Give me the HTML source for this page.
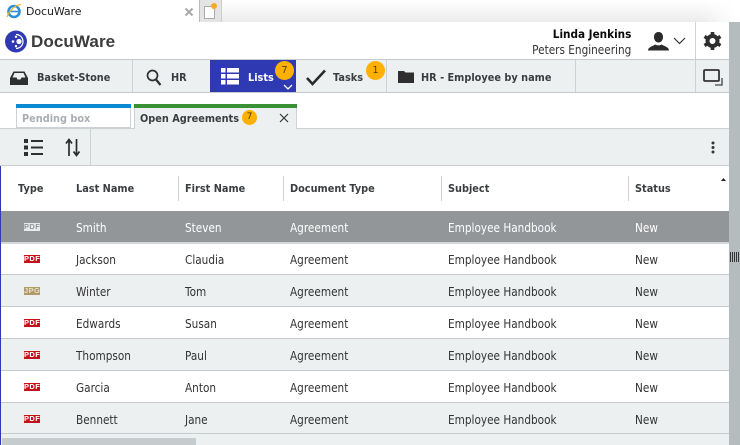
<!DOCTYPE html>
<html><head><meta charset="utf-8">
<style>
html,body{margin:0;padding:0;background:#fff;}
#p{position:relative;width:740px;height:445px;overflow:hidden;background:#fff;font-family:"DejaVu Sans","Liberation Sans",sans-serif;font-size:11px;color:#333;}
#p div,#p span.a,#p svg{position:absolute;}
.t{white-space:nowrap;line-height:14px;}
.b{font-weight:bold;font-size:11px;color:#3a3d40;transform:scaleX(.887);transform-origin:0 50%;}
.n{top:60px;height:32px;background:#edf0f1;}
.v{background:#ccd1d3;width:1px;}
.r{left:1px;width:728px;height:31px;}
.s{left:1px;width:728px;height:1px;background:#c6cbce;}
.c{white-space:nowrap;line-height:14px;font-size:12px;color:#333;transform:scaleX(.875);transform-origin:0 50%;}
.ic{left:24px;width:16px;height:8px;background:#c8101a;color:#fff;font:bold 7.5px/8px "Liberation Sans",sans-serif;letter-spacing:.4px;text-align:center;}
.h{top:182px;white-space:nowrap;line-height:14px;font-weight:bold;font-size:11px;color:#3a3d40;transform:scaleX(.887);transform-origin:0 50%;}
.hv{top:176px;height:25px;width:1px;background:#ccd1d3;}
.bd{border-radius:50%;background:#ffb000;color:#4a3b10;text-align:center;font-size:9.5px;}
</style></head><body><div id="p">
<!-- browser chrome -->
<div style="left:199px;top:0;width:541px;height:22px;background:linear-gradient(180deg,#fff 0,#ececec 100%)"></div>
<div style="left:700px;top:0;width:40px;height:22px;background:linear-gradient(90deg,rgba(255,255,255,0) 0,#fff 90%)"></div>
<div style="left:199px;top:0;width:22px;height:22px;background:#e4e4e4"></div>
<div style="left:199px;top:0;width:1px;height:22px;background:#bbb"></div>
<div style="left:221px;top:0;width:1px;height:22px;background:#ccc"></div>
<div style="left:204px;top:6px;width:11px;height:13px;background:#fff;border:1px solid #aaa;box-sizing:border-box"></div>
<div style="left:211px;top:3px;width:6px;height:6px;background:#f9a825;border-radius:50%"></div>
<svg style="left:6px;top:3px" width="17" height="16" viewBox="0 0 17 16"><circle cx="8" cy="8.500" r="5.500" fill="none" stroke="#2f8fd8" stroke-width="2.600"/><path d="M3 8.500h10" stroke="#2f8fd8" stroke-width="1.600"/><path d="M1 14C3 8 9 2 15 1.500" fill="none" stroke="#f2b632" stroke-width="1.300"/></svg>
<div class="t" style="left:26px;top:5px;font-size:11px;color:#222;letter-spacing:-.1px">DocuWare</div>
<svg style="left:184px;top:7px" width="10" height="10" viewBox="0 0 10 10"><path d="M1.500 1.500l7 7M8.500 1.500l-7 7" stroke="#aaa" stroke-width="2"/></svg>

<!-- header -->
<svg style="left:5px;top:30px" width="22" height="23" viewBox="0 0 22 23"><circle cx="11" cy="11.500" r="11" fill="#2f3ab2"/><circle cx="14" cy="11.500" r="2.600" fill="#fff"/><circle cx="8" cy="11.500" r="1.300" fill="#fff"/><circle cx="11" cy="6.800" r="1.200" fill="#fff"/><circle cx="11" cy="16.200" r="1.200" fill="#fff"/><path d="M11 4.500a7 7 0 0 1 0 14" fill="none" stroke="#fff" stroke-width="1.200"/></svg>
<div class="t" style="left:31px;top:32px;font-size:17px;line-height:20px;font-weight:bold;color:#3c3c3c;font-family:'Liberation Sans',sans-serif;letter-spacing:.1px">DocuWare</div>
<div class="t" style="right:109px;top:27px;font-weight:bold;font-size:11.5px;color:#0a0a0a;transform:scaleX(.91);transform-origin:100% 50%">Linda Jenkins</div>
<div class="t" style="right:109px;top:43px;font-size:12px;color:#333;transform:scaleX(.875);transform-origin:100% 50%">Peters Engineering</div>
<svg style="left:648px;top:31px" width="21" height="21" viewBox="0 0 21 21"><path d="M10.500 1c3 0 4.500 2.300 4.500 5s-1.500 5.500-4.500 5.500S6 8.700 6 6s1.500-5 4.500-5zM0 19.500c0-3.500 5-4.500 7.500-6 1.500 1.200 4.500 1.200 6 0 2.500 1.500 7.500 2.500 7.500 6z" fill="#2b2b2b"/></svg>
<svg style="left:673px;top:37px" width="13" height="8" viewBox="0 0 13 8"><path d="M1 1l5.500 5.500L12 1" fill="none" stroke="#333" stroke-width="1.200"/></svg>
<div class="v" style="left:695px;top:22px;height:38px"></div>
<svg style="left:703px;top:31px" width="19" height="20" viewBox="0 0 19 20"><circle cx="9.500" cy="10" r="5" fill="none" stroke="#2f2f2f" stroke-width="4"/><path d="M9.500 1v3M9.500 16v3M1.500 5.500l2.600 1.500M14.900 13l2.600 1.500M1.500 14.500l2.600-1.500M14.900 7l2.600-1.500" stroke="#2f2f2f" stroke-width="3.600"/></svg>
<div style="left:729px;top:22px;width:11px;height:423px;background:#b5bcbe"></div>
<div style="left:730px;top:252px;width:9px;height:10px;background:repeating-linear-gradient(90deg,#333 0,#333 1px,#b5bcbe 1px,#b5bcbe 2px)"></div>

<!-- nav -->
<div class="n" style="left:0;width:729px;"></div>
<div style="left:0;top:59px;width:729px;height:1px;background:#c6cbce"></div>
<div style="left:0;top:92px;width:729px;height:1px;background:#c6cbce"></div>
<div class="v" style="left:132px;top:60px;height:32px"></div>
<div class="v" style="left:386px;top:60px;height:32px"></div>
<div class="v" style="left:575px;top:60px;height:32px"></div>
<div class="v" style="left:695px;top:60px;height:32px"></div>
<svg style="left:10px;top:71px" width="18" height="14" viewBox="0 0 18 14"><path d="M3.500 0.500h11L18 7v7H0V7zM4.500 2L2.500 6.500h4l1 2h3l1-2h4L13.500 2z" fill="#2f2f2f" fill-rule="evenodd"/></svg>
<div class="t b" style="left:37px;top:71px">Basket-Stone</div>
<svg style="left:146px;top:69px" width="16" height="17" viewBox="0 0 16 17"><circle cx="6.500" cy="6.500" r="5" fill="none" stroke="#2f2f2f" stroke-width="1.700"/><path d="M10 10.500l4.500 5.500" stroke="#2f2f2f" stroke-width="2.200"/></svg>
<div class="t b" style="left:171px;top:71px">HR</div>
<div style="left:210px;top:60px;width:86px;height:32px;background:#2f3ab2"></div>
<svg style="left:221px;top:68px" width="18" height="17" viewBox="0 0 18 17"><path d="M0 0h4.500v4.500H0zM6 0h12v4.500H6zM0 6h4.500v4.500H0zM6 6h12v4.500H6zM0 12h4.500v4.500H0zM6 12h12v4.500H6z" fill="#fff"/></svg>
<div class="t b" style="left:248px;top:71px;color:#fff">Lists</div>
<div class="bd" style="left:275px;top:61px;width:19px;height:19px;line-height:19px">7</div>
<svg style="left:283px;top:84px" width="10" height="6" viewBox="0 0 10 6"><path d="M1 1l4 4 4-4" fill="none" stroke="#fff" stroke-width="1.300"/></svg>
<svg style="left:306px;top:69px" width="20" height="17" viewBox="0 0 20 17"><path d="M1 9l5.500 6L19 1.500" fill="none" stroke="#2b2b2b" stroke-width="2.600"/></svg>
<div class="t b" style="left:333px;top:71px">Tasks</div>
<div class="bd" style="left:366px;top:61px;width:19px;height:19px;line-height:19px">1</div>
<svg style="left:398px;top:71px" width="16" height="12" viewBox="0 0 16 12"><path d="M0 0h6l1.500 1.500H16V12H0z" fill="#2f2f2f"/></svg>
<div class="t b" style="left:421px;top:71px">HR - Employee by name</div>
<svg style="left:702px;top:68px" width="21" height="18" viewBox="0 0 21 18"><rect x="2" y="2" width="15" height="11" rx="1" fill="none" stroke="#333" stroke-width="1.800"/><path d="M20 10v7h-7" fill="none" stroke="#444" stroke-width="1.300"/></svg>

<!-- tabs -->
<div style="left:16px;top:104px;width:115px;height:24px;background:#fff;border:1px solid #ccd1d3;border-top:0;box-sizing:border-box"></div>
<div style="left:16px;top:104px;width:115px;height:4px;background:#0a8ad2"></div>
<div class="t b" style="left:22px;top:112px;color:#a9aeb2">Pending box</div>
<div style="left:134px;top:104px;width:163px;height:26px;background:#edf0f1;border:1px solid #ccd1d3;border-top:0;border-bottom:0;box-sizing:border-box"></div>
<div style="left:134px;top:104px;width:163px;height:4px;background:#3a9135"></div>
<div class="t b" style="left:140px;top:112px">Open Agreements</div>
<div class="bd" style="left:242px;top:110px;width:15px;height:15px;line-height:15px;font-size:9px">7</div>
<svg style="left:279px;top:113px" width="10" height="10" viewBox="0 0 10 10"><path d="M1 1l8 8M9 1l-8 8" stroke="#333" stroke-width="1.200"/></svg>

<!-- toolbar -->
<div style="left:0;top:128px;width:134px;height:1px;background:#ccd1d3"></div>
<div style="left:297px;top:128px;width:432px;height:1px;background:#ccd1d3"></div>
<div style="left:0;top:129px;width:729px;height:36px;background:#edf0f1"></div>
<div style="left:0;top:165px;width:729px;height:1px;background:#ccd1d3"></div>
<div class="v" style="left:90px;top:129px;height:36px"></div>
<svg style="left:24px;top:138px" width="20" height="19" viewBox="0 0 20 19"><path d="M0 1h4v4H0zM0 7.500h4v4H0zM0 14h4v4H0zM7 2h12v2H7zM7 8.500h12v2H7zM7 15h12v2H7z" fill="#2f2f2f"/></svg>
<svg style="left:65px;top:138px" width="16" height="19" viewBox="0 0 16 19"><path d="M4 18V2M1 5.500L4 1.500l3 4M11.500 1v16M8.500 13.500l3 4 3-4" fill="none" stroke="#2b2b2b" stroke-width="1.700"/></svg>
<svg style="left:711px;top:141px" width="4" height="13" viewBox="0 0 4 13"><circle cx="2" cy="2" r="1.500" fill="#333"/><circle cx="2" cy="6.500" r="1.500" fill="#333"/><circle cx="2" cy="11" r="1.500" fill="#333"/></svg>

<!-- left accent -->
<div style="left:0;top:166px;width:1px;height:279px;background:#2f3ab2"></div>

<!-- table header -->
<div class="h" style="left:18px">Type</div>
<div class="h" style="left:76px">Last Name</div>
<div class="hv" style="left:178px"></div>
<div class="h" style="left:185px">First Name</div>
<div class="hv" style="left:283px"></div>
<div class="h" style="left:290px">Document Type</div>
<div class="hv" style="left:441px"></div>
<div class="h" style="left:448px">Subject</div>
<div class="hv" style="left:628px"></div>
<div class="h" style="left:635px">Status</div>
<svg style="left:721px;top:178px" width="5" height="3" viewBox="0 0 5 3"><path d="M0 3L2.500 0 5 3z" fill="#222"/></svg>

<!-- rows -->
<div class="r" style="top:211px;background:#939699"></div>
<div class="s" style="top:242px;height:2px;background:#d5d8da"></div>
<div class="r" style="top:244px;height:30px;background:#fff"></div>
<div class="s" style="top:274px"></div>
<div class="r" style="top:275px;background:#edf0f1"></div>
<div class="s" style="top:306px"></div>
<div class="r" style="top:307px;background:#fff"></div>
<div class="s" style="top:338px"></div>
<div class="r" style="top:339px;background:#edf0f1"></div>
<div class="s" style="top:370px"></div>
<div class="r" style="top:371px;background:#fff"></div>
<div class="s" style="top:402px"></div>
<div class="r" style="top:403px;height:30px;background:#edf0f1"></div>
<div class="s" style="top:433px"></div>

<div class="ic" style="top:223px;background:#e8e9ea;color:#939699">PDF</div>
<div class="c" style="left:76px;top:221px;color:#fff">Smith</div><div class="c" style="left:185px;top:221px;color:#fff">Steven</div><div class="c" style="left:290px;top:221px;color:#fff">Agreement</div><div class="c" style="left:448px;top:221px;color:#fff">Employee Handbook</div><div class="c" style="left:635px;top:221px;color:#fff">New</div>

<div class="ic" style="top:255px">PDF</div>
<div class="c" style="left:76px;top:253px">Jackson</div><div class="c" style="left:185px;top:253px">Claudia</div><div class="c" style="left:290px;top:253px">Agreement</div><div class="c" style="left:448px;top:253px">Employee Handbook</div><div class="c" style="left:635px;top:253px">New</div>

<div class="ic" style="top:287px;background:#b09a68;color:#e8e0c8">JPG</div>
<div class="c" style="left:76px;top:285px">Winter</div><div class="c" style="left:185px;top:285px">Tom</div><div class="c" style="left:290px;top:285px">Agreement</div><div class="c" style="left:448px;top:285px">Employee Handbook</div><div class="c" style="left:635px;top:285px">New</div>

<div class="ic" style="top:319px">PDF</div>
<div class="c" style="left:76px;top:317px">Edwards</div><div class="c" style="left:185px;top:317px">Susan</div><div class="c" style="left:290px;top:317px">Agreement</div><div class="c" style="left:448px;top:317px">Employee Handbook</div><div class="c" style="left:635px;top:317px">New</div>

<div class="ic" style="top:351px">PDF</div>
<div class="c" style="left:76px;top:349px">Thompson</div><div class="c" style="left:185px;top:349px">Paul</div><div class="c" style="left:290px;top:349px">Agreement</div><div class="c" style="left:448px;top:349px">Employee Handbook</div><div class="c" style="left:635px;top:349px">New</div>

<div class="ic" style="top:383px">PDF</div>
<div class="c" style="left:76px;top:381px">Garcia</div><div class="c" style="left:185px;top:381px">Anton</div><div class="c" style="left:290px;top:381px">Agreement</div><div class="c" style="left:448px;top:381px">Employee Handbook</div><div class="c" style="left:635px;top:381px">New</div>

<div class="ic" style="top:415px">PDF</div>
<div class="c" style="left:76px;top:413px">Bennett</div><div class="c" style="left:185px;top:413px">Jane</div><div class="c" style="left:290px;top:413px">Agreement</div><div class="c" style="left:448px;top:413px">Employee Handbook</div><div class="c" style="left:635px;top:413px">New</div>

<!-- bottom scrollbar -->
<div style="left:1px;top:434px;width:728px;height:11px;background:#edf0f1"></div>
<div style="left:2px;top:438px;width:194px;height:7px;background:#c6cbce"></div>
</div></body></html>
